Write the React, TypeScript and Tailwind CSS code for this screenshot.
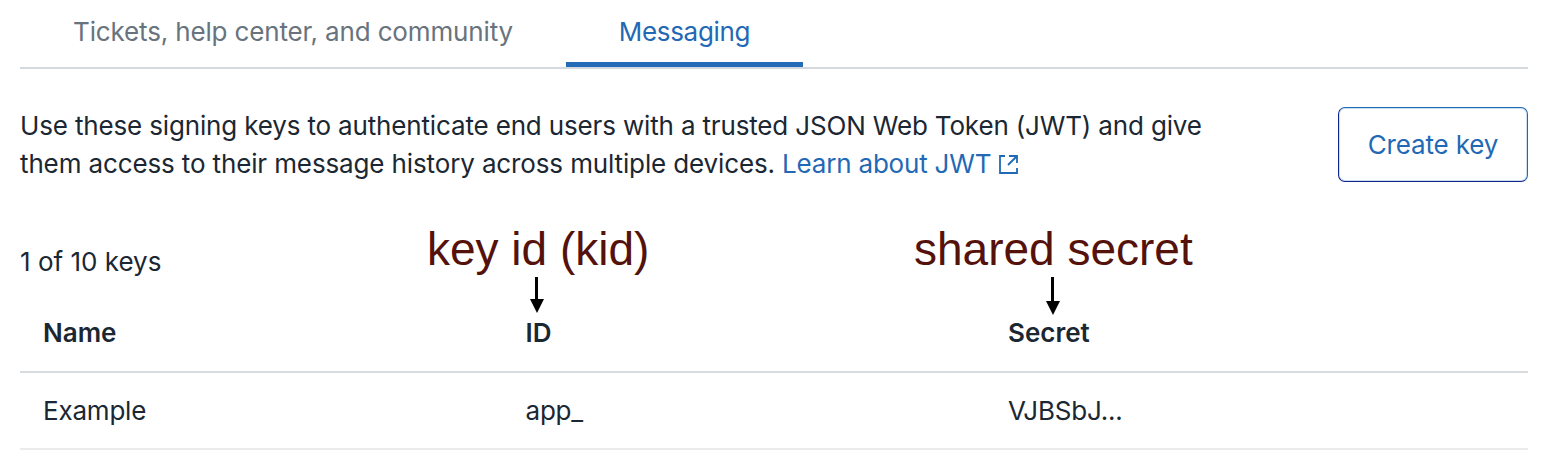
import React from "react";

function DownArrow({ length }: { length: number }) {
  return (
    <svg width="14" height={length} viewBox={`0 0 14 ${length}`} className="block">
      <path d={`M6.500 0V${length - 12}`} stroke="#000" strokeWidth="3" />
      <path d={`M0 ${length - 14}H14L7 ${length}Z`} fill="#000" />
    </svg>
  );
}

export default function App() {
  return (
    <main className="relative h-[460px] w-[1558px] overflow-hidden bg-white pl-5 pr-[30px] font-[Inter,sans-serif] text-[26px] leading-[38px] text-[#1b2732]">
      <nav className="flex h-[69px] border-b-2 border-[#d3d9dd] pt-[13px] tracking-[-0.15px]">
        <div className="w-[546px] whitespace-nowrap pl-[53px] text-[#68737d]">Tickets, help center, and community</div>
        <div className="h-[54px] w-[237px] border-b-[5px] border-[#256cb8] text-center tracking-[-0.3px] text-[#1f69b5]">Messaging</div>
      </nav>
      <section className="flex h-[174px] justify-between pt-[38px] tracking-[-0.157px]">
        <p className="whitespace-nowrap">
          Use these signing keys to authenticate end users with a trusted JSON Web Token (JWT) and give
          <br />
          <span className="tracking-[-0.13px]">them access to their message history across multiple devices.</span>{" "}
          <a className="tracking-[-0.2px] text-[#1f69b5]">Learn about JWT</a>
          <svg width="19" height="19" viewBox="0 0 19 19" fill="none" stroke="#1f69b5" strokeWidth="1.8" className="ml-[8px] inline-block align-[-1px]">
            <path d="M6 1H1V18H18V13M10 1H18V8M18 1L9 10" />
          </svg>
        </p>
        <button className="h-[75px] w-[190px] rounded-[7px] border border-b-[#10248f] border-l-[#10248f] border-r-[#1f69b5] border-t-[#1f69b5] text-[#1f69b5] shadow-[inset_0_0_0_1px_#9cc0e080]">Create key</button>
      </section>
      <div>1 of 10 keys</div>
      <div className="mt-[14px] grid h-[78px] grid-cols-[482.5px_482.5px_1fr] items-center border-b-2 border-[#d8dcde] pl-[23px] font-semibold">
        <span>Name</span><span>ID</span><span>Secret</span>
      </div>
      <div className="grid h-[77px] grid-cols-[482.5px_482.5px_1fr] items-center border-b-2 border-[#e9ebed] pl-[23px] tracking-[-0.2px]">
        <span>Example</span><span>app_</span><span>VJBSbJ...</span>
      </div>
      <div className="absolute left-[427px] top-[222px] whitespace-nowrap font-['Liberation_Sans',sans-serif] text-[46px] leading-[54px] text-[#55120b]">key id (kid)</div>
      <div className="absolute left-[914px] top-[222px] whitespace-nowrap font-['Liberation_Sans',sans-serif] text-[46px] leading-[54px] text-[#55120b]">shared secret</div>
      <div className="absolute left-[530px] top-[277px]"><DownArrow length={36} /></div>
      <div className="absolute left-[1046px] top-[277px]"><DownArrow length={38} /></div>
    </main>
  );
}
